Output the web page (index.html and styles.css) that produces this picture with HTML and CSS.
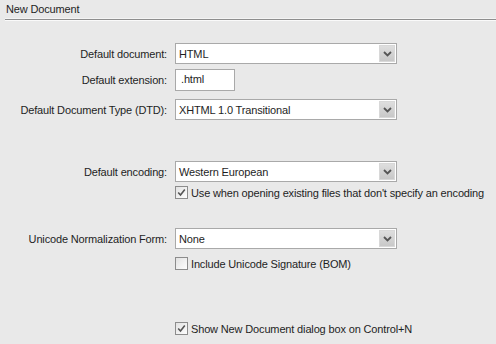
FILE: index.html
```html
<!DOCTYPE html>
<html>
<head>
<meta charset="utf-8">
<link rel="stylesheet" href="styles.css">
</head>
<body>
<div class="header">New Document</div>
<div class="form">
  <div class="row r1">
    <span class="label">Default document:</span>
    <div class="select"><span class="val">HTML</span><span class="btn"><svg width="9" height="6" viewBox="0 0 9 6"><path d="M1 1 L4.5 4.5 L8 1" fill="none" stroke="#555" stroke-width="1.8"/></svg></span></div>
  </div>
  <div class="row r2">
    <span class="label">Default extension:</span>
    <div class="input">.html</div>
  </div>
  <div class="row r3">
    <span class="label">Default Document Type (DTD):</span>
    <div class="select"><span class="val">XHTML 1.0 Transitional</span><span class="btn"><svg width="9" height="6" viewBox="0 0 9 6"><path d="M1 1 L4.5 4.5 L8 1" fill="none" stroke="#555" stroke-width="1.8"/></svg></span></div>
  </div>
  <div class="row r4">
    <span class="label">Default encoding:</span>
    <div class="select"><span class="val">Western European</span><span class="btn"><svg width="9" height="6" viewBox="0 0 9 6"><path d="M1 1 L4.5 4.5 L8 1" fill="none" stroke="#555" stroke-width="1.8"/></svg></span></div>
  </div>
  <div class="check c1">
    <span class="box"><svg width="9" height="9" viewBox="0 0 9 9"><path d="M1.2 4.5 L3.5 7 L7.8 1.5" fill="none" stroke="#555" stroke-width="1.6"/></svg></span>
    <span class="ctext">Use when opening existing files that don't specify an encoding</span>
  </div>
  <div class="row r5">
    <span class="label">Unicode Normalization Form:</span>
    <div class="select"><span class="val">None</span><span class="btn"><svg width="9" height="6" viewBox="0 0 9 6"><path d="M1 1 L4.5 4.5 L8 1" fill="none" stroke="#555" stroke-width="1.8"/></svg></span></div>
  </div>
  <div class="check c2">
    <span class="box"></span>
    <span class="ctext">Include Unicode Signature (BOM)</span>
  </div>
  <div class="check c3">
    <span class="box"><svg width="9" height="9" viewBox="0 0 9 9"><path d="M1.2 4.5 L3.5 7 L7.8 1.5" fill="none" stroke="#555" stroke-width="1.6"/></svg></span>
    <span class="ctext">Show New Document dialog box on Control+N</span>
  </div>
</div>
</body>
</html>
```

FILE: styles.css
```css
html, body {
  margin: 0;
  padding: 0;
  background: #e9e9e9;
  width: 496px;
  height: 344px;
  overflow: hidden;
  font-family: "Liberation Sans", Arial, sans-serif;
  font-size: 11px;
  letter-spacing: -0.15px;
  color: #1e1e1e;
}
.header {
  height: 19px;
  line-height: 19px;
  padding-left: 6px;
  margin-left: 5px;
  text-indent: -5px;
  border-bottom: 1px solid #8e8e8e;
  box-shadow: 0 1px 0 #fafafa, inset 0 -1px 0 #f4f4f4;
}
.form {
  display: flex;
  flex-direction: column;
}
.row {
  display: flex;
  align-items: center;
  gap: 8px;
}
.label {
  width: 167px;
  text-align: right;
  flex: none;
}
.select {
  box-sizing: border-box;
  width: 222px;
  height: 21px;
  border: 1px solid #a9a9a9;
  background: #fff;
  display: flex;
  align-items: center;
  justify-content: space-between;
  padding: 1px 1px 1px 3px;
}
.btn {
  box-sizing: border-box;
  width: 16px;
  height: 17px;
  background: linear-gradient(#dedede, #c8c8c8);
  border: 1px solid #d8d8d8;
  display: flex;
  align-items: center;
  justify-content: center;
}
.input {
  box-sizing: border-box;
  width: 60px;
  height: 22px;
  border: 1px solid #a9a9a9;
  background: #fff;
  padding: 0 0 2px 5px;
  display: flex;
  align-items: center;
}
.r1 { margin-top: 23px; }
.r2 { margin-top: 5px; }
.r3 { margin-top: 8px; }
.r4 { margin-top: 41px; }
.r5 { margin-top: 28px; }
.check {
  display: flex;
  align-items: center;
  height: 15px;
  padding-left: 175px;
  gap: 3px;
}
.c1 { margin-top: 3px; }
.c2 { margin-top: 7px; }
.c3 { margin-top: 50px; }
.box {
  box-sizing: border-box;
  width: 13px;
  height: 13px;
  border: 1px solid #8c8c8c;
  background: linear-gradient(135deg, #e2e2e2, #fdfdfd);
  display: flex;
  align-items: center;
  justify-content: center;
}
```
